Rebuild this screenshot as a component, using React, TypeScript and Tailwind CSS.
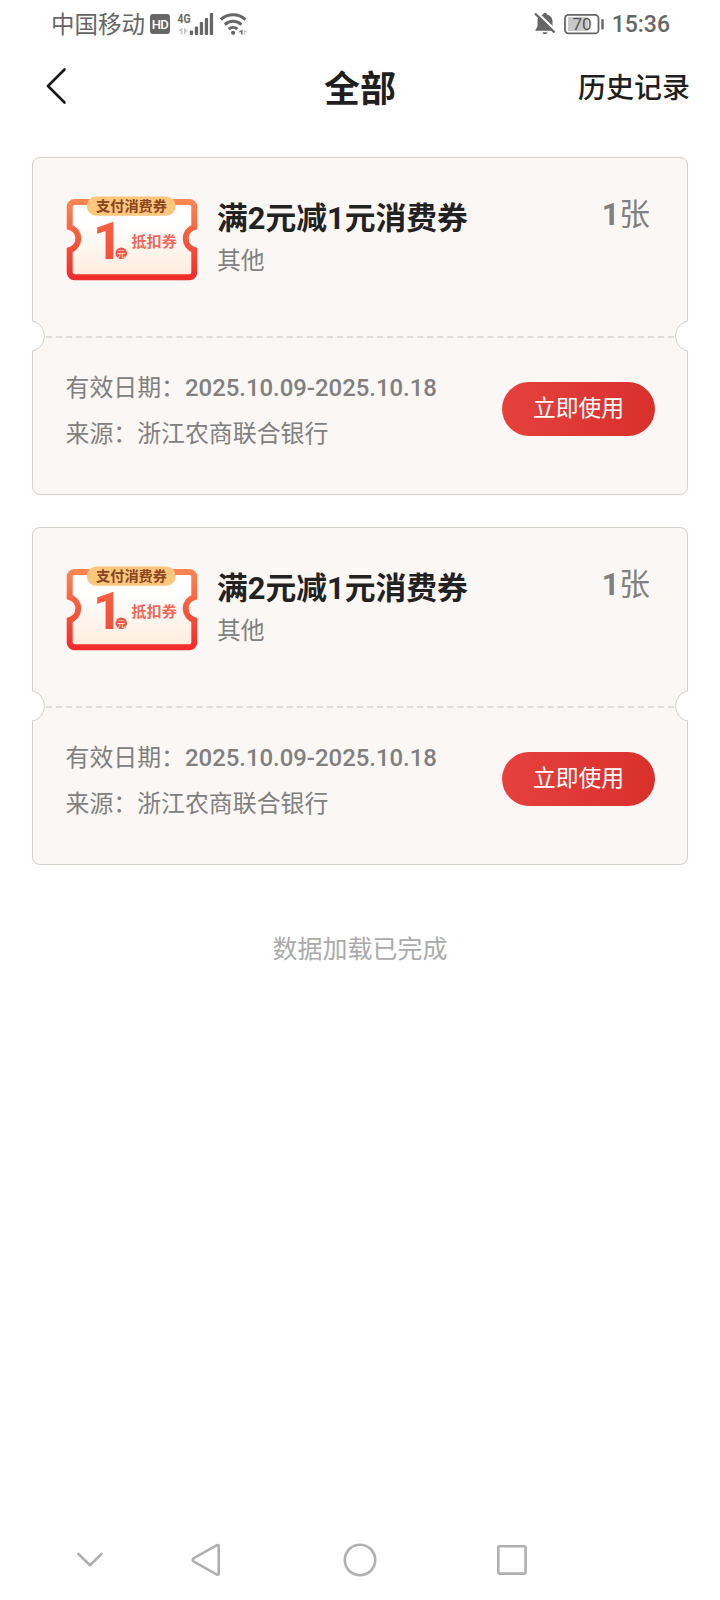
interface Coupon {
  id: number;
  title: string;
  category: string;
  count: number;
  validity: string;
  source: string;
}

const coupons: Coupon[] = [
  {
    id: 1,
    title: "满2元减1元消费券",
    category: "其他",
    count: 1,
    validity: "2025.10.09-2025.10.18",
    source: "浙江农商联合银行",
  },
  {
    id: 2,
    title: "满2元减1元消费券",
    category: "其他",
    count: 1,
    validity: "2025.10.09-2025.10.18",
    source: "浙江农商联合银行",
  },
];

function StatusBar() {
  return (
    <div className="flex h-12 items-center justify-between pl-[51px] pr-[50px] text-[23.5px] text-[#666]">
      <div className="flex items-center">
        <span className="pt-0.5 leading-[46px]">中国移动</span>
        <span className="ml-[5px] flex h-5 w-5 items-center justify-center rounded-[3px] bg-[#666] text-[13px] font-medium leading-none tracking-[-0.5px] text-white">
          HD
        </span>
        {/* 4G + signal bars */}
        <svg className="ml-[7px] h-6 w-[37px]" viewBox="0 0 37 24" fill="#666">
          <text
            x="0.5"
            y="10.5"
            fontSize="13"
            fontWeight="700"
            textLength="13"
            lengthAdjust="spacingAndGlyphs"
          >
            4G
          </text>
          <path d="M5.500 15.500v7H3.800v-3.500H1z M7 15.500v7h1.500v-3H11z" fill="#c4c4c4" />
          <rect x="12.800" y="18.500" width="3.300" height="4.500" rx="1" />
          <rect x="17.800" y="14.500" width="3.300" height="8.500" rx="1" />
          <rect x="22.800" y="10" width="3.300" height="13" rx="1" />
          <rect x="27.800" y="6" width="3.300" height="17" rx="1" />
          <rect x="32.800" y="1" width="3.300" height="22" rx="1" />
        </svg>
        {/* wifi */}
        <svg
          className="ml-[6px] h-6 w-7"
          viewBox="0 0 28 24"
          fill="none"
          stroke="#666"
          strokeWidth="3"
        >
          <path d="M0.800 7.600a18 18 0 0 1 24.600 0" />
          <path d="M4.800 12.600a12 12 0 0 1 16.600 0" />
          <path d="M8.800 17.200a6.400 6.400 0 0 1 8.600 0" />
          <circle cx="13.100" cy="20.800" r="2.100" fill="#666" stroke="none" />
          <path d="M22.500 17.500v5h-1.500v-2.200H18z" fill="#666" stroke="none" />
          <path d="M24 17.500v5h1v-2.200H27.500z" fill="#c4c4c4" stroke="none" />
        </svg>
      </div>
      <div className="flex items-center">
        <svg className="h-6 w-[22px]" viewBox="0 0 22 24" fill="#666">
          <path d="M11 0.800a2 2 0 0 1 2 1.600c3.500 .8 5.500 3.400 5.500 6.700v5.600l2 3v1H1.500v-1l2-3V9.100C3.500 5.800 5.500 3.200 9 2.400a2 2 0 0 1 2-1.600z" />
          <path d="M8.600 20.200h4.800a2.400 2 0 0 1-4.800 0z" />
          <path d="M2.500 0L22.500 19.500" stroke="#fff" strokeWidth="2.400" />
          <path d="M1 1.500L20.500 20.500" stroke="#666" strokeWidth="2.400" />
        </svg>
        <svg className="ml-[8px] h-6 w-[41px]" viewBox="0 0 41 24">
          <rect x="4" y="5" width="20" height="14" fill="#c9c9c9" />
          <rect
            x="1"
            y="2.800"
            width="33.500"
            height="18.600"
            rx="3.500"
            fill="none"
            stroke="#666"
            strokeWidth="1.800"
          />
          <rect x="37.300" y="7" width="2.400" height="10.500" rx="1" fill="#666" />
          <text x="8.500" y="18" fontSize="17" fill="#555">
            70
          </text>
        </svg>
        <span className="ml-[7px] pt-0.5 text-[23px] font-medium leading-[46px]">
          15:36
        </span>
      </div>
    </div>
  );
}

function Header() {
  return (
    <div className="grid h-20 grid-cols-[1fr_auto_1fr] items-center pl-[46px] pr-[30px] text-[#1f1f1f]">
      <svg
        className="mb-1 h-9 w-5"
        viewBox="0 0 20 36"
        fill="none"
        stroke="#1a1a1a"
        strokeWidth="2.600"
        strokeLinecap="round"
        strokeLinejoin="round"
      >
        <path d="M18.500 1.500L2 18l16.500 16.500" />
      </svg>
      <h1 className="mr-4 pt-[3px] text-center text-[36px] font-bold leading-none">
        全部
      </h1>
      <span className="pt-0.5 text-right text-[28px] font-medium leading-none">
        历史记录
      </span>
    </div>
  );
}

function CouponPicture() {
  return (
    <svg className="h-[86px] w-[132px] shrink-0" viewBox="0 0 132 86">
      <defs>
        <linearGradient id="frame" x1="0" y1="0" x2="0" y2="1">
          <stop offset="0" stopColor="#fb8552" />
          <stop offset="1" stopColor="#f02d2c" />
        </linearGradient>
        <linearGradient id="paper" x1="0" y1="0" x2="0" y2="1">
          <stop offset="0.3" stopColor="#fff" />
          <stop offset="1" stopColor="#ffebdc" />
        </linearGradient>
        <linearGradient id="digit" x1="0" y1="0" x2="0" y2="1">
          <stop offset="0" stopColor="#f9663f" />
          <stop offset="1" stopColor="#ec4a3e" />
        </linearGradient>
      </defs>
      <path
        d="M8.500 6H123.500a4.800 4.800 0 0 1 4.800 4.800V31a12 12 0 0 0 0 23V76.500a4.800 4.800 0 0 1-4.800 4.800H8.500a4.800 4.800 0 0 1-4.800-4.800V54a12 12 0 0 0 0-23V10.800A4.800 4.800 0 0 1 8.500 6z"
        fill="url(#paper)"
        stroke="url(#frame)"
        strokeWidth="6"
      />
      <rect x="20.700" y="0.500" width="89" height="19.200" rx="9.600" fill="#fcc67c" />
      <text x="65.500" y="15" fontSize="14.200" fontWeight="700" textAnchor="middle" fill="#8a4420">
        支付消费券
      </text>
      <text x="27" y="63.300" fontSize="51" fontWeight="800" fill="url(#digit)">
        1
      </text>
      <circle cx="55.300" cy="57.300" r="5.800" fill="#e8554a" />
      <text x="55.300" y="60.500" fontSize="8.500" textAnchor="middle" fill="#ffe3dc">
        元
      </text>
      <text x="65.500" y="50.800" fontSize="15.100" fontWeight="700" fill="#f2685a">
        抵扣券
      </text>
    </svg>
  );
}

function CouponCard({ coupon }: { coupon: Coupon }) {
  return (
    <div className="relative h-[338px] overflow-hidden">
      <div className="flex h-full flex-col rounded-lg border border-[#d6cfca] bg-[#fbf7f5]">
        <div className="flex h-[178px] pl-[33px] pr-[37px] pt-[38px]">
          <CouponPicture />
          <div className="ml-[19px] flex-1 pt-[1.5px]">
            <h2 className="text-[30.8px] font-bold leading-[42px] text-[#222]">
              {coupon.title}
            </h2>
            <p className="text-[23.800px] leading-[42px] text-[#808080]">
              {coupon.category}
            </p>
          </div>
          <p className="pt-px text-[30.700px] leading-[36px] text-[#808080]">
            <span className="font-bold">{coupon.count}</span>张
          </p>
        </div>
        <div className="mx-[13px] border-t-2 border-dashed border-[#e0dcda]" />
        <div className="flex justify-between pl-[32.500px] pr-[32px] pt-[27px]">
          <div className="text-[23.900px] leading-[46px] text-[#808080]">
            <p>
              有效日期：<span className="font-medium">{coupon.validity}</span>
            </p>
            <p>来源：{coupon.source}</p>
          </div>
          <button
            type="button"
            className="mt-[17px] h-[54px] w-[153px] rounded-full bg-linear-to-r from-[#e6413e] to-[#d9302b] text-[22.800px] text-white"
          >
            立即使用
          </button>
        </div>
      </div>
      {/* side notches */}
      <span className="absolute -left-[19px] top-[163px] h-8 w-8 rounded-full border border-[#d6cfca] bg-white" />
      <span className="absolute -right-[19px] top-[163px] h-8 w-8 rounded-full border border-[#d6cfca] bg-white" />
    </div>
  );
}

function NavigationBar() {
  return (
    <svg
      className="h-20 w-full"
      viewBox="0 0 720 80"
      fill="none"
      stroke="#b0b0b0"
      strokeWidth="2.600"
      strokeLinejoin="round"
      strokeLinecap="round"
    >
      <path d="M78.500 34l11.500 11.300L101.500 34" />
      <path d="M193.800 38.200L217 25.200q1.700-.7 1.700 1.200v27q0 1.900-1.700 1.200L193.800 41.600q-2-1.700 0-3.400z" />
      <circle cx="360" cy="40" r="15.200" />
      <rect x="498.300" y="26.300" width="27.300" height="27.300" rx="1.500" />
    </svg>
  );
}

export default function App() {
  return (
    <div className="flex h-[1600px] w-[720px] flex-col bg-white font-[Roboto,'Noto_Sans_CJK_SC',sans-serif]">
      <StatusBar />
      <Header />
      <main className="flex flex-1 flex-col gap-8 px-8 pt-[29px]">
        {coupons.map((c) => (
          <CouponCard key={c.id} coupon={c} />
        ))}
        <p className="mt-[35px] text-center text-[25px] leading-[36px] text-[#aaa]">
          数据加载已完成
        </p>
      </main>
      <NavigationBar />
    </div>
  );
}
